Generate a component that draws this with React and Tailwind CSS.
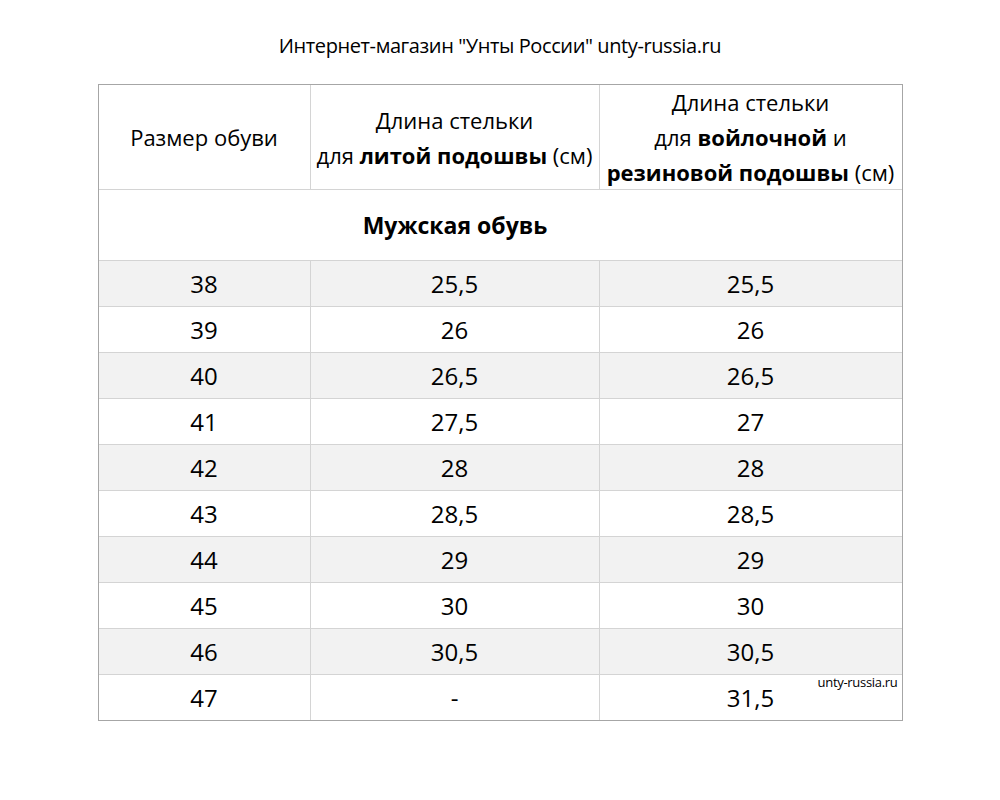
import React from 'react';

const ROWS = [
  ['38', '25,5', '25,5'],
  ['39', '26', '26'],
  ['40', '26,5', '26,5'],
  ['41', '27,5', '27'],
  ['42', '28', '28'],
  ['43', '28,5', '28,5'],
  ['44', '29', '29'],
  ['45', '30', '30'],
  ['46', '30,5', '30,5'],
  ['47', '-', '31,5'],
];

export default function App() {
  return (
    <div className="min-h-[800px] w-[1000px] bg-white text-black font-['Open_Sans',sans-serif]">
      {/* Title */}
      <div className="h-[84px] pt-[32px] text-center text-[20px] leading-[28px] tracking-[-0.4px]">
        Интернет-магазин "Унты России" unty-russia.ru
      </div>

      {/* Table */}
      <div className="w-[805px] mx-auto border border-[#a6a6a6]">
        <div className="grid grid-cols-[212px_289px_302px] h-[105px] border-b border-[#d4d4d4] text-[22px] leading-[35px]">
          <div className="border-r border-[#d4d4d4] flex items-center justify-center">Размер обуви</div>
          <div className="border-r border-[#d4d4d4] flex flex-col items-center justify-center">
            <span>Длина стельки</span>
            <span>
              для <b className="font-bold">литой подошвы</b> (см)
            </span>
          </div>
          <div className="flex flex-col items-center justify-center">
            <span>Длина стельки</span>
            <span>
              для <b className="font-bold">войлочной</b> и
            </span>
            <span>
              <b className="font-bold">резиновой подошвы</b> (см)
            </span>
          </div>
        </div>

        <div className="h-[71px] pr-[90px] border-b border-[#d4d4d4] flex items-center justify-center text-[23px] font-bold">
          Мужская обувь
        </div>

        {ROWS.map((r, i) => (
          <div
            key={r[0]}
            className={`grid grid-cols-[212px_289px_302px] text-[24px] ${
              i === ROWS.length - 1 ? 'h-[45px]' : 'h-[46px] border-b border-[#d4d4d4]'
            } ${i % 2 === 0 ? 'bg-[#f2f2f2]' : 'bg-white'}`}
          >
            <div className="border-r border-[#d4d4d4] flex items-center justify-center">{r[0]}</div>
            <div className="border-r border-[#d4d4d4] flex items-center justify-center">{r[1]}</div>
            <div className="relative flex items-center justify-center">
              {r[2]}
              {i === ROWS.length - 1 && (
                <span className="absolute right-[4px] top-0 text-[13px] leading-[15px] tracking-[-0.3px]">
                  unty-russia.ru
                </span>
              )}
            </div>
          </div>
        ))}
      </div>
    </div>
  );
}
